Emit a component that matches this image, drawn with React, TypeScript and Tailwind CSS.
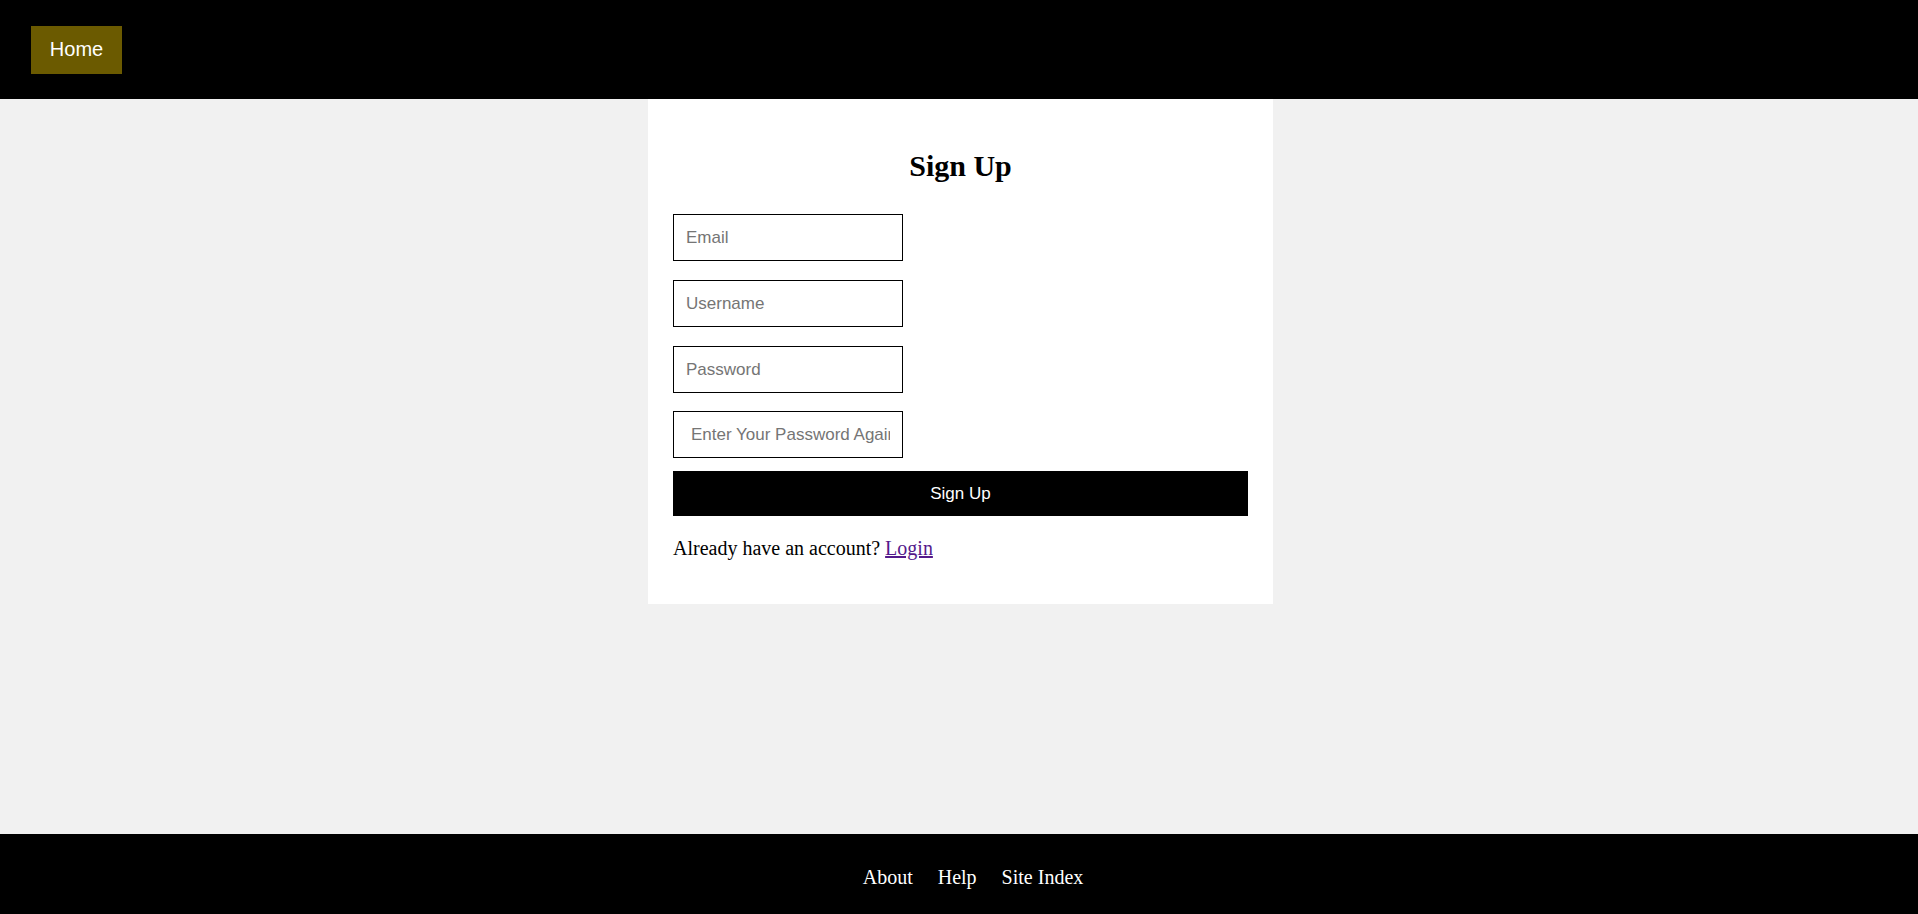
import React from "react";

export default function App() {
  const inputCls =
    "block w-[230px] h-[47px] border border-black bg-white px-[12px] text-[17px] text-black placeholder:text-[#757575] outline-none";
  return (
    <div className="min-h-screen flex flex-col bg-[#f1f1f1]" style={{ fontFamily: '"Liberation Serif", "Times New Roman", serif' }}>
      <header className="h-[99px] bg-black flex items-center pl-[31px]">
        <a
          href="#"
          className="h-[48px] w-[91px] flex items-center justify-center pb-[2px] bg-[#6b5a00] text-white text-[20px] no-underline"
          style={{ fontFamily: '"Liberation Sans", Arial, sans-serif' }}
        >
          Home
        </a>
      </header>
      <main className="flex-1 flex justify-center pl-[3px]">
        <div className="w-[625px] h-[505px] bg-white px-[25px] pt-[50px]">
          <h2 className="text-center text-[30px] font-bold leading-[34px] text-black">Sign Up</h2>
          <form className="mt-[31px]" style={{ fontFamily: '"Liberation Sans", Arial, sans-serif' }}>
            <input className={inputCls + " mb-[19px]"} placeholder="Email" type="email" />
            <input className={inputCls + " mb-[19px]"} placeholder="Username" type="text" />
            <input className={inputCls + " mb-[18px]"} placeholder="Password" type="password" />
            <input className={inputCls + " !pl-[17px]"} placeholder="Enter Your Password Again" type="password" />
            <button
              type="button"
              className="mt-[13px] block w-[575px] h-[45px] bg-black text-white text-[17px]"
            >
              Sign Up
            </button>
          </form>
          <p className="mt-[21px] text-[20px] leading-[23px] text-black">
            Already have an account?{" "}
            <a href="#" className="underline text-[#551a8b]">
              Login
            </a>
          </p>
        </div>
      </main>
      <footer className="h-[80px] bg-black pt-[32px]">
        <ul className="flex justify-center gap-[25px] pl-[28px] text-white text-[20px] leading-[23px]">
          <li><a href="#">About</a></li>
          <li><a href="#">Help</a></li>
          <li><a href="#">Site Index</a></li>
        </ul>
      </footer>
    </div>
  );
}
